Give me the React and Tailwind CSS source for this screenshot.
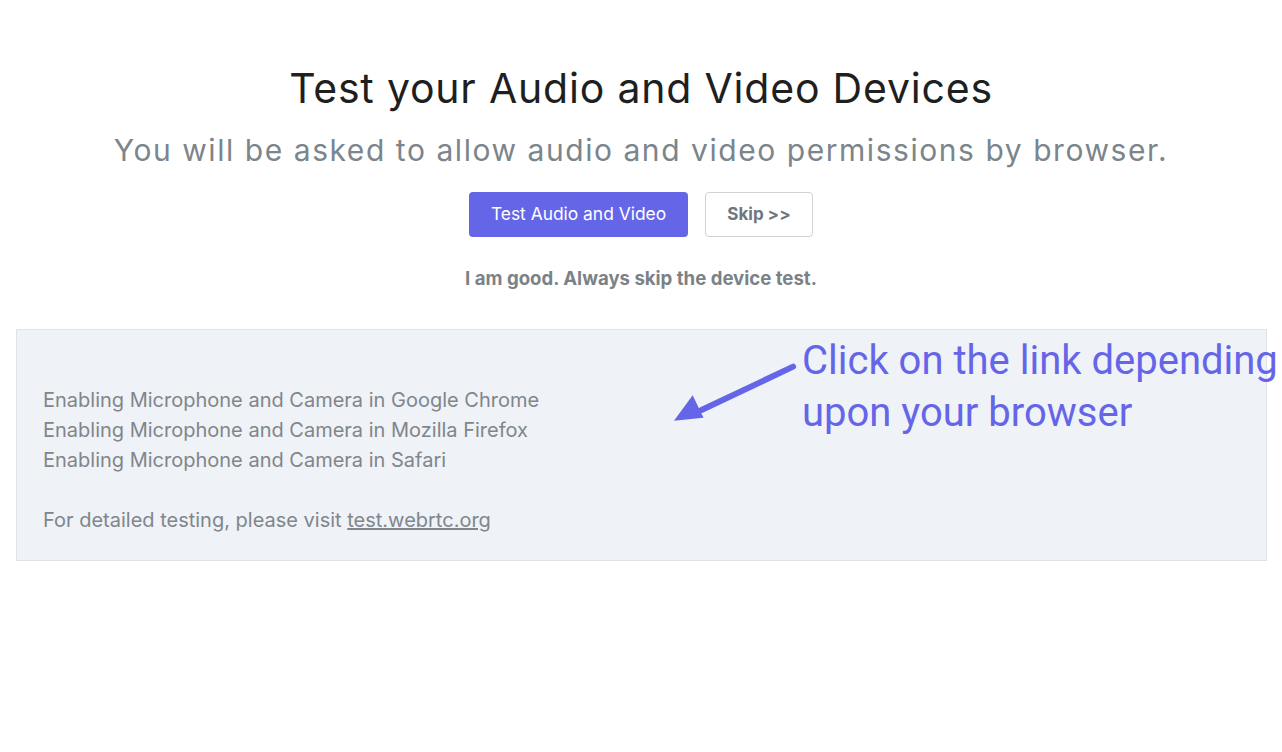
export default function App() {
  return (
    <div className="min-h-[752px] bg-white font-['Inter',sans-serif]">
      <div className="flex flex-col items-center pt-[64px]">
        <h1 className="text-[41px] leading-[48px] text-[#1f1f1f] tracking-[0.8px]">Test your Audio and Video Devices</h1>
        <p className="mt-[20px] text-[30px] leading-[36px] text-[#7b858b] tracking-[1.55px]">
          You will be asked to allow audio and video permissions by browser.
        </p>
        <div className="mt-[24px] flex gap-[17px]">
          <button className="h-[45px] w-[219px] rounded-[4px] bg-[#6565e8] text-[17.4px] text-white">Test Audio and Video</button>
          <button className="h-[45px] w-[108px] rounded-[4px] border border-[#cfd2d6] bg-white text-[17px] font-bold text-[#6f777d]">Skip &gt;&gt;</button>
        </div>
        <p className="mt-[28px] text-[18.6px] font-bold text-[#7b8287]">I am good. Always skip the device test.</p>
      </div>

      <div className="relative mx-4 mt-[36px] w-[1251px] border border-[#dfe2e6] bg-[#eff2f7] px-[26px] pt-[55px] pb-[25px] text-[20px] leading-[30px] text-[#80868b]">
        <p>Enabling Microphone and Camera in Google Chrome</p>
        <p>Enabling Microphone and Camera in Mozilla Firefox</p>
        <p>Enabling Microphone and Camera in Safari</p>
        <p className="mt-[30px]">
          For detailed testing, please visit <a className="underline">test.webrtc.org</a>
        </p>

        <div className="absolute left-[655px] top-[5px] flex items-start">
          <svg width="130" height="92" viewBox="0 0 132 92" className="mt-[28px]">
            <line x1="123" y1="3" x2="30" y2="47" stroke="#6565e8" strokeWidth="6" strokeLinecap="round" />
            <polygon points="2,58 21,32 32,55" fill="#6565e8" />
          </svg>
          <p className="font-['Roboto',sans-serif] text-[40px] leading-[52px] whitespace-nowrap text-[#6565e8]">
            Click on the link depending
            <br />
            upon your browser
          </p>
        </div>
      </div>
    </div>
  )
}
